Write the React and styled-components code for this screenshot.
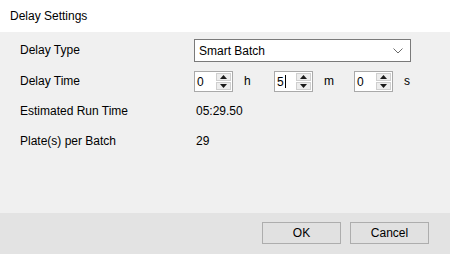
import React from 'react';
import styled, { createGlobalStyle } from 'styled-components';

const GlobalStyle = createGlobalStyle`
    html, body {
        margin: 0;
        padding: 0;
        background: #ffffff;
    }
    body {
        font-family: 'Liberation Sans', Arial, sans-serif;
        font-size: 12px;
        color: #000000;
    }
`;

const Dialog = styled.div`
    width: 450px;
    height: 254px;
    display: flex;
    flex-direction: column;
    overflow: hidden;
`;

const TitleBar = styled.div`
    height: 32px;
    flex: none;
    display: flex;
    align-items: center;
    padding-left: 10px;
    background: #ffffff;
    font-size: 12px;
`;

const Body = styled.div`
    flex: 1;
    background: #f0f0f0;
    padding: 7px 0 0 20px;
    display: flex;
    flex-direction: column;
    gap: 9px;
`;

const Row = styled.div`
    display: flex;
    align-items: center;
    height: ${(props) => props.height || 21}px;
`;

const Label = styled.div`
    width: 174px;
    flex: none;
    padding-bottom: 2px;
`;

const Value = styled.div`
    padding: 0 0 2px 2px;
`;

// Combo box
const Combo = styled.div`
    width: 217px;
    height: 23px;
    box-sizing: border-box;
    border: 1px solid #7a7a7a;
    background: #ffffff;
    display: flex;
    align-items: center;
    justify-content: space-between;
    padding: 0 7px 0 4px;
`;

const Chevron = () => (
    <svg width="10" height="6" viewBox="0 0 10 6">
        <path d="M0.5 0.5 L5 5 L9.5 0.5" fill="none" stroke="#6a6a6a" strokeWidth="1" />
    </svg>
);

// Numeric up/down
const SpinGroup = styled.div`
    width: 80px;
    display: flex;
    align-items: center;
`;

const Spinner = styled.div`
    width: 39px;
    height: 21px;
    box-sizing: border-box;
    border: 1px solid #a9a9a9;
    background: #ffffff;
    display: flex;
`;

const SpinText = styled.div`
    flex: 1;
    display: flex;
    align-items: center;
    padding-left: 2px;
`;

const Caret = styled.span`
    display: inline-block;
    width: 1px;
    height: 13px;
    background: #000000;
    margin-left: 1px;
`;

const SpinButtons = styled.div`
    width: 16px;
    display: flex;
    flex-direction: column;
    gap: 1px;
    padding: 1px 1px 1px 0;
    box-sizing: border-box;
`;

const SpinButton = styled.div`
    flex: 1;
    background: #ededed;
    border: 1px solid #cfcfcf;
    display: flex;
    align-items: center;
    justify-content: center;
`;

const Arrow = ({ down }) => (
    <svg width="7" height="4" viewBox="0 0 7 4">
        <path d={down ? 'M0 0 L7 0 L3.5 4 Z' : 'M0 4 L7 4 L3.5 0 Z'} fill="#1a1a1a" />
    </svg>
);

const Unit = styled.div`
    margin-left: 11px;
    padding-bottom: 2px;
`;

const NumberBox = ({ value, unit, focused }) => (
    <SpinGroup>
        <Spinner>
            <SpinText>
                {value}
                {focused && <Caret />}
            </SpinText>
            <SpinButtons>
                <SpinButton><Arrow /></SpinButton>
                <SpinButton><Arrow down /></SpinButton>
            </SpinButtons>
        </Spinner>
        <Unit>{unit}</Unit>
    </SpinGroup>
);

// Footer buttons
const Footer = styled.div`
    height: 41px;
    flex: none;
    background: #e3e3e3;
    display: flex;
    align-items: center;
    justify-content: flex-end;
    gap: 9px;
    padding-right: 21px;
    padding-bottom: 2px;
    box-sizing: border-box;
`;

const Button = styled.button`
    width: 79px;
    height: 22px;
    box-sizing: border-box;
    background: #e1e1e1;
    border: 1px solid #adadad;
    font-family: 'Liberation Sans', Arial, sans-serif;
    font-size: 12px;
    color: #000000;
    padding: 0;
`;

const App = () => {
    return (
        <>
            <GlobalStyle />
            <Dialog>
                <TitleBar>Delay Settings</TitleBar>
                <Body>
                    <Row height={23}>
                        <Label>Delay Type</Label>
                        <Combo>
                            <span>Smart Batch</span>
                            <Chevron />
                        </Combo>
                    </Row>
                    <Row>
                        <Label>Delay Time</Label>
                        <NumberBox value="0" unit="h" />
                        <NumberBox value="5" unit="m" focused />
                        <NumberBox value="0" unit="s" />
                    </Row>
                    <Row>
                        <Label>Estimated Run Time</Label>
                        <Value>05:29.50</Value>
                    </Row>
                    <Row>
                        <Label>Plate(s) per Batch</Label>
                        <Value>29</Value>
                    </Row>
                </Body>
                <Footer>
                    <Button>OK</Button>
                    <Button>Cancel</Button>
                </Footer>
            </Dialog>
        </>
    );
};

export default App;
